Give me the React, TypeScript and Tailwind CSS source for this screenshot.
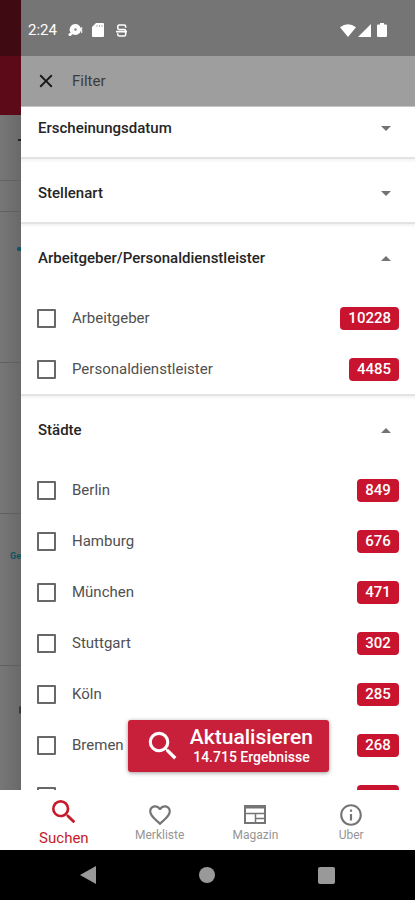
import React from "react";
import { MdClose, MdFavoriteBorder, MdInfoOutline, MdSearch } from "react-icons/md";

type Option = { label: string; count?: number };
type Section = { title: string; options?: Option[] };

const sections: Section[] = [
  { title: "Erscheinungsdatum" },
  { title: "Stellenart" },
  {
    title: "Arbeitgeber/Personaldienstleister",
    options: [
      { label: "Arbeitgeber", count: 10228 },
      { label: "Personaldienstleister", count: 4485 },
    ],
  },
  {
    title: "Städte",
    options: [
      { label: "Berlin", count: 849 },
      { label: "Hamburg", count: 676 },
      { label: "München", count: 471 },
      { label: "Stuttgart", count: 302 },
      { label: "Köln", count: 285 },
      { label: "Bremen", count: 268 },
      { label: "" },
    ],
  },
];

function Backdrop() {
  return (
    <div aria-hidden="true" className="flex w-[21px] shrink-0 flex-col overflow-hidden bg-gradient-to-r from-[#777777] to-[#696969]">
      <div className="h-14 shrink-0 bg-[#400a12]" />
      <div className="h-[59px] shrink-0 bg-[#5c0a18]" />
      <div className="flex h-[66px] shrink-0 items-center justify-end border-b border-[#626262] pb-4">
        <span className="h-[2px] w-[3px] bg-[#222222]" />
      </div>
      <div className="h-[31px] shrink-0 border-b border-[#606060]" />
      <div className="flex h-[151px] shrink-0 justify-end border-b border-[#606060] pt-[35px]">
        <span className="h-1 w-1 rounded-l-full bg-[#0b5662]" />
      </div>
      <div className="h-[151px] shrink-0 border-b border-[#606060]" />
      <div className="h-[152px] shrink-0 border-b border-[#606060] pt-[34px] pl-[10px] text-[9px] leading-4 font-bold text-[#0b5662]">
        Ge
      </div>
      <div className="flex h-[124px] shrink-0 justify-end pt-10">
        <span className="h-2 w-[2px] rounded-l-full bg-[#383838]" />
      </div>
    </div>
  );
}

function StatusBar() {
  return (
    <div className="flex h-14 shrink-0 items-center justify-between bg-[#757575] pt-1 pr-7 pl-[7px] text-white">
      <div className="flex items-center">
        <span className="w-10 text-[15px] leading-5">2:24</span>
        <svg viewBox="0 0 16 16" className="h-4 w-4" fill="currentColor">
          <path d="M7.500 2a5.500 5.500 0 1 1-2.700 10.300L1 14l1.500-3.500A5.500 5.500 0 0 1 7.500 2zM13.200 5h1v6h-1z" />
          <circle cx="7.500" cy="7.500" r="1.200" fill="#858585" />
          <circle cx="2" cy="12.500" r="1.500" />
        </svg>
        <svg viewBox="0 0 12 14" className="ml-2 h-[14px] w-3" fill="currentColor">
          <path d="M4 0h7q1 0 1 1v12q0 1-1 1H1q-1 0-1-1V4z" />
          <path d="M5 2v2M7.500 2v2M10 2v2" stroke="#b0b0b0" strokeWidth="1" />
        </svg>
        <svg viewBox="0 0 12 14" className="ml-3 h-[13px] w-[11px]" fill="none" stroke="currentColor" strokeWidth="1.700">
          <path d="M10.500 4V2.500Q10.500 1 9 1H3.500Q2 1 2 2.500v2Q2 6 3.500 6H9q1.500 0 1.500 1.500v4Q10.500 13 9 13H3.500Q2 13 2 11.500V10M0 8.200h12" />
        </svg>
      </div>
      <div className="flex items-center">
        <svg viewBox="0 0 16 13" className="h-[13px] w-4" fill="currentColor">
          <path d="M0 3.200Q8-2.800 16 3.200L8 13z" />
        </svg>
        <svg viewBox="0 0 13 13" className="ml-[2px] h-[13px] w-[13px]" fill="currentColor">
          <path d="M13 0v13H0z" />
        </svg>
        <svg viewBox="0 0 10 14" className="ml-[6px] h-[14px] w-[10px]" fill="currentColor">
          <path d="M3 0h4v1.500h2q1 0 1 1V13q0 1-1 1H1q-1 0-1-1V2.500q0-1 1-1h2z" />
        </svg>
      </div>
    </div>
  );
}

function Caret({ up }: { up: boolean }) {
  return (
    <svg viewBox="0 0 10 5" className="mr-2 h-[5px] w-[10px]" fill="#737373">
      <path d={up ? "M0 5L5 0l5 5z" : "M0 0l5 5 5-5z"} />
    </svg>
  );
}

function OptionRow({ label, count }: Option) {
  return (
    <li>
      <label className="flex h-[51px] items-center px-4 text-[15px] text-[#505050]">
        <input
          type="checkbox"
          aria-label={label || "Weitere Stadt"}
          className="mr-4 h-[19px] w-[19px] shrink-0 appearance-none rounded-[1px] border-2 border-[#686868] bg-white"
        />
        <span className="flex-1">{label}</span>
        <span className="h-[23px] min-w-[42px] rounded bg-[#c8142f] px-2 text-center leading-[23px] font-medium text-white">
          {count}
        </span>
      </label>
    </li>
  );
}

function FilterSection({ title, options }: Section) {
  return (
    <section className="border-t-2 border-[#e3e3e3] shadow-[inset_0_3px_3px_-1px_#f3f3f3]">
      <button
        type="button"
        aria-expanded={!!options}
        className={`flex w-full items-center justify-between pt-6 pr-4 pl-[17px] text-left text-[15px] leading-5 font-medium text-[#252525] ${options ? "pb-[25px]" : "pb-[19px]"}`}
      >
        {title}
        <Caret up={!!options} />
      </button>
      {options && (
        <ul className="-mb-px">
          {options.map((option) => (
            <OptionRow key={option.label} {...option} />
          ))}
        </ul>
      )}
    </section>
  );
}

function MagazineIcon() {
  return (
    <svg viewBox="0 0 22 19" className="h-[19px] w-[22px]" fill="none" stroke="currentColor" strokeWidth="2">
      <path d="M1 1h20v17H1z" />
      <path d="M1 2h20" strokeWidth="3" />
      <path d="M1 8.500h20M11.500 9v9M11.500 13.500H21" strokeWidth="1.500" />
    </svg>
  );
}

const tabs = [
  { label: "Merkliste", icon: <MdFavoriteBorder size={26} /> },
  { label: "Magazin", icon: <MagazineIcon /> },
  { label: "Uber", icon: <MdInfoOutline size={26} /> },
];

export default function App() {
  return (
    <div className="flex h-screen flex-col overflow-hidden bg-white font-[Roboto,'Liberation_Sans',sans-serif]">
      <main className="relative flex min-h-0 flex-1 overflow-hidden">
        <Backdrop />
        <div className="flex min-w-0 flex-1 flex-col bg-white">
          <StatusBar />
          <header className="flex h-[51px] shrink-0 items-center border-b border-[#c4c4c4] bg-[#9e9e9e] pl-[14px]">
            <button type="button" aria-label="Schließen" className="mr-[15px] text-[#151515]">
              <MdClose size={22} />
            </button>
            <h1 className="text-[15px] text-[#3c3c3c]">Filter</h1>
          </header>
          <div className="min-h-0 flex-1 overflow-hidden">
            <div className="-mt-[15px]">
              {sections.map((section) => (
                <FilterSection key={section.title} {...section} />
              ))}
            </div>
          </div>
        </div>
        <button
          type="button"
          className="absolute right-[86px] bottom-[18px] flex h-[52px] items-center rounded-[3px] bg-[#c8203a] px-4 text-white shadow-[0_1px_4px_rgba(0,0,0,0.4)]"
        >
          <MdSearch size={38} className="mr-2" />
          <span className="flex flex-col items-center">
            <span className="text-[21px] leading-[22px] font-medium">Aktualisieren</span>
            <span className="text-sm leading-[18px] font-medium">14.715 Ergebnisse</span>
          </span>
        </button>
      </main>
      <nav className="grid h-[60px] shrink-0 grid-cols-4 bg-white px-4">
        <button type="button" className="flex flex-col items-center pt-[6px] text-[#c41a2b]">
          <MdSearch size={32} />
          <span className="text-[15px] leading-5">Suchen</span>
        </button>
        {tabs.map((tab) => (
          <button key={tab.label} type="button" className="flex flex-col items-center pt-[11px] text-[#757575]">
            <span className="flex h-[27px] items-center">{tab.icon}</span>
            <span className="text-xs leading-[14px] text-[#959595]">{tab.label}</span>
          </button>
        ))}
      </nav>
      <footer className="flex h-[50px] shrink-0 items-center justify-around bg-black px-7">
        <button type="button" aria-label="Zurück">
          <svg viewBox="0 0 16 18" className="h-[18px] w-4" fill="#999999">
            <path d="M16 0v18L0 9z" />
          </svg>
        </button>
        <button type="button" aria-label="Startseite" className="h-4 w-4 rounded-full bg-[#999999]" />
        <button type="button" aria-label="Übersicht" className="h-[17px] w-[17px] rounded-[2px] bg-[#999999]" />
      </footer>
    </div>
  );
}
